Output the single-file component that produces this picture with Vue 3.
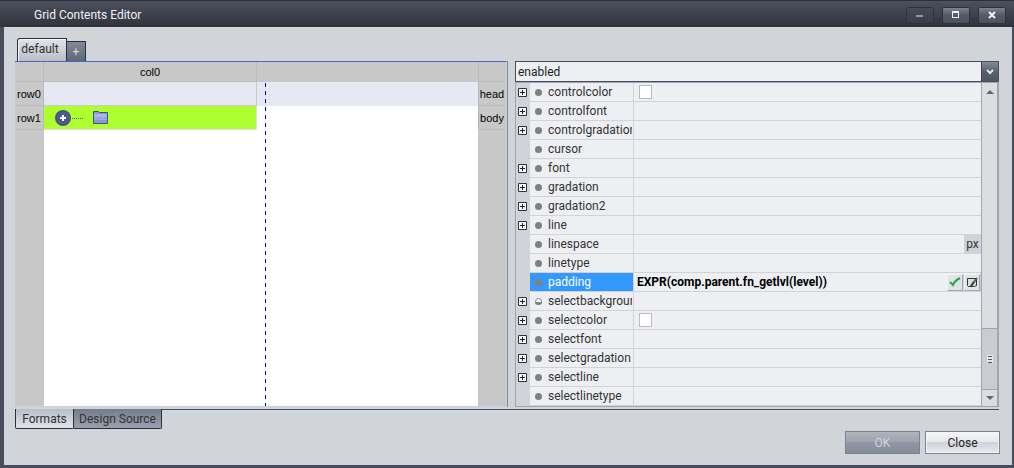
<script setup>
import { ref } from 'vue'

const current = ref('enabled')
const selected = ref('padding')
const properties = [
  { name: 'controlcolor', expand: true, swatch: true },
  { name: 'controlfont', expand: true },
  { name: 'controlgradation', expand: true },
  { name: 'cursor' },
  { name: 'font', expand: true },
  { name: 'gradation', expand: true },
  { name: 'gradation2', expand: true },
  { name: 'line', expand: true },
  { name: 'linespace', unit: 'px' },
  { name: 'linetype' },
  { name: 'padding', value: 'EXPR(comp.parent.fn_getlvl(level))' },
  { name: 'selectbackground', expand: true, half: true },
  { name: 'selectcolor', expand: true, swatch: true },
  { name: 'selectfont', expand: true },
  { name: 'selectgradation', expand: true },
  { name: 'selectline', expand: true },
  { name: 'selectlinetype' },
]
</script>

<template>
  <div class="window">
    <header class="titlebar">
      <h1>Grid Contents Editor</h1>
      <div class="controls">
        <button class="dim" aria-label="Minimize">
          <svg width="8" height="8" viewBox="0 0 8 8"><path d="M0 4h7v2H0z" fill="#9296a8" /></svg>
        </button>
        <button aria-label="Maximize">
          <svg width="8" height="8" viewBox="0 0 8 8"><path fill-rule="evenodd" d="M0 0h7v7H0zM1 2v4h5V2z" fill="#eef0f3" /></svg>
        </button>
        <button aria-label="Close window">
          <svg width="8" height="8" viewBox="0 0 8 8"><path d="M1 1l6 6M7 1L1 7" stroke="#f1f2f4" stroke-width="2" /></svg>
        </button>
      </div>
    </header>

    <main class="content">
      <nav class="tabs top">
        <button class="tab active">default</button>
        <button class="tab add" aria-label="Add format">+</button>
      </nav>

      <div class="workspace">
        <section class="designer">
          <table>
            <colgroup><col class="c-label"><col class="c-col"><col><col class="c-band"></colgroup>
            <thead>
              <tr><th></th><th>col0</th><th class="plain"></th><th class="edge"></th></tr>
            </thead>
            <tbody>
              <tr><th>row0</th><td class="head"></td><td class="head bare"></td><th class="edge">head</th></tr>
              <tr>
                <th>row1</th>
                <td class="picked">
                  <svg width="66" height="20" viewBox="0 0 66 20">
                    <circle cx="12" cy="10" r="8" fill="#4f5a8c" />
                    <circle cx="12" cy="10" r="7" fill="none" stroke="#465287" />
                    <path d="M9 10h6M12 7v6" stroke="#fff" stroke-width="2" />
                    <path d="M21 10.500h11" stroke="#4b6d2c" stroke-dasharray="1 1" />
                    <path d="M42.500 15.500v-12h5l1 1h8v11z" fill="#8797d4" stroke="#45507f" />
                    <path d="M43 6h13v3H43z" fill="#a9b7e8" />
                    <path d="M43 9h13v3H43z" fill="#98a7de" />
                  </svg>
                </td>
                <td></td>
                <th class="edge">body</th>
              </tr>
              <tr class="rest"><th></th><td></td><td></td><th></th></tr>
            </tbody>
          </table>
          <i class="guide"></i>
        </section>

        <section class="inspector">
          <div class="combo">
            <select v-model="current" aria-label="Property">
              <option>enabled</option>
            </select>
            <span class="arrow"><svg width="8" height="6" viewBox="0 0 8 6"><path d="M1 1l3 3 3-3" fill="none" stroke="#e3e6ec" stroke-width="2" /></svg></span>
          </div>
          <div class="list">
            <table>
              <colgroup><col class="c-gutter"><col class="c-name"><col></colgroup>
              <tbody>
                <tr v-for="p in properties" :key="p.name" :class="{ selected: selected === p.name }" @click="selected = p.name">
                  <td class="gutter">
                    <button v-if="p.expand" :aria-label="'Expand ' + p.name">
                      <svg width="9" height="9" viewBox="0 0 9 9"><path d="M.5 .5h8v8h-8z" fill="#f6f7f9" stroke="#333" /><path d="M2 4.500h5M4.500 2v5" stroke="#222" /></svg>
                    </button>
                  </td>
                  <th scope="row">
                    <div class="name">
                      <svg width="7" height="7" viewBox="0 0 7 7">
                        <circle v-if="!p.half" cx="3.500" cy="3.500" r="3.500" fill="#808080" />
                        <g v-else><circle cx="3.500" cy="3.500" r="3" fill="#fff" stroke="#808080" /><path d="M0 4h7a3.500 3 0 0 1-7 0z" fill="#808080" /></g>
                      </svg>
                      <span>{{ p.name }}</span>
                    </div>
                  </th>
                  <td>
                    <div class="value">
                      <button v-if="p.swatch" class="swatch" :aria-label="p.name + ' value'"></button>
                      <span v-if="p.value" class="expression">{{ p.value }}</span>
                      <span v-if="p.unit" class="unit">{{ p.unit }}</span>
                      <div v-if="p.value" class="actions">
                        <button aria-label="Apply expression">
                          <svg width="12" height="10" viewBox="0 0 12 10"><path d="M1 5l3 3c1-3 3-5 7-7" fill="none" stroke="#2fa63a" stroke-width="2" /></svg>
                        </button>
                        <button aria-label="Edit expression">
                          <svg width="12" height="11" viewBox="0 0 12 11"><path d="M1.500 1.500h9v7l-2 1h-6l-1-1z" fill="#d9dce2" stroke="#333" /><path d="M5 9l6-8" stroke="#333" stroke-width="2" /><path d="M8 5l3-4" stroke="#a9764d" /></svg>
                        </button>
                      </div>
                    </div>
                  </td>
                </tr>
              </tbody>
            </table>
            <div class="scroll">
              <button aria-label="Scroll up"><svg width="8" height="4" viewBox="0 0 8 4"><path d="M0 4l4-4 4 4z" fill="#5f687a" /></svg></button>
              <div class="track"></div>
              <div class="thumb"><svg width="6" height="8" viewBox="0 0 6 8"><path d="M0 0h6v8H0z" fill="#e6e8ec" /><path d="M1 1.500h4M1 4.500h4M1 7.500h4" stroke="#4b5568" stroke-width="1" /></svg></div>
              <button class="down" aria-label="Scroll down"><svg width="8" height="4" viewBox="0 0 8 4"><path d="M0 0l4 4 4-4z" fill="#5f687a" /></svg></button>
            </div>
          </div>
        </section>
      </div>

      <div class="bottomline"></div>
      <nav class="tabs bottom">
        <button class="tab active">Formats</button>
        <button class="tab">Design Source</button>
      </nav>
      <footer>
        <button class="action" disabled>OK</button>
        <button class="action close">Close</button>
      </footer>
    </main>
  </div>
</template>

<style>
body { margin: 0; }
</style>

<style scoped>
* { box-sizing: border-box; }
.window {
  min-height: 100vh;
  display: flex;
  flex-direction: column;
  background: #484d5b;
  padding: 0 2px 3px 4px;
  color: #333;
  font: 12px/18px Roboto, "Noto Sans", sans-serif;
}
button, select { font: inherit; color: inherit; margin: 0; padding: 0; border: 0; background: none; border-radius: 0; }
svg { display: block; flex: none; }
table { border-spacing: 0; table-layout: fixed; width: 100%; }
th, td { padding: 0; font-weight: 400; }
.titlebar {
  height: 27px;
  flex: none;
  margin: 0 -2px 0 -4px;
  padding: 2px 8px 0 34px;
  display: flex;
  align-items: center;
  justify-content: space-between;
  background: linear-gradient(#4d515e, #30333b);
  border-top: 1px solid #2d3038;
}
h1 { margin: 0; font-size: 12px; font-weight: 400; color: #eef0f4; }
.controls { display: flex; gap: 8px; }
.controls button {
  width: 28px;
  height: 17px;
  display: grid;
  place-items: center;
  border: 1px solid #30333b;
  border-radius: 2px;
  background: linear-gradient(#798191, #525968 50%, #4c5260);
}
.controls .dim { background: linear-gradient(#484c57, #3a3d46); }
.content { flex: 1; padding: 11px 13px 10px 11px; background: #d1d4d9; display: flex; flex-direction: column; }
.tabs { display: flex; }
.top { height: 23px; align-items: flex-end; padding-left: 2px; }
.top .tab { border: 1px solid #2b303b; border-bottom: 0; height: 20px; }
.top .active {
  width: 50px;
  height: 23px;
  padding: 0 4px 2px 0;
  border-radius: 3px 0 0;
  background: linear-gradient(#e2e4e8, #b9bdc7);
  box-shadow: inset 1px 1px #f5f6f8;
}
.top .add { width: 20px; margin-left: -1px; color: #d3d7df; background: linear-gradient(#828999, #5f6778); }
.workspace { flex: none; display: flex; }
.designer {
  flex: 1;
  position: relative;
  border-top: 1px solid #3e6bc9;
  border-right: 1px solid #d1d4d9;
  border-bottom: 1px solid #c9ced8;
  background: #fff;
  font: 11px/16px "Liberation Sans", sans-serif;
  color: #000;
}
.designer table { height: 100%; }
.c-label { width: 29px; }
.c-col { width: 213px; }
.c-band { width: 28px; }
.designer th { background: #c8c8c8; border-right: 1px solid #bababa; border-bottom: 1px solid #bababa; height: 24px; }
.designer thead th { height: 20px; }
.designer .plain, .designer .rest th { border-color: #c8c8c8; }
.designer .edge { border-left: 1px solid #bababa; border-right-color: #c8c8c8; }
.designer td { height: 24px; }
.designer .head { background: #e6e9f3; border-right: 1px solid #c8cbd3; border-bottom: 1px solid #c8cbd3; }
.designer .bare { border-color: #e6e9f3; }
.designer .picked { background: #adff2f; border-right: 1px solid #e0e2e6; border-bottom: 1px solid #e0e2e6; }
.picked svg { margin-left: 7px; }
.designer .rest th, .designer .rest td { height: auto; }
.guide {
  position: absolute;
  left: 250px;
  top: 21px;
  bottom: 0;
  width: 1px;
  background: repeating-linear-gradient(#0000c8 0 4px, transparent 4px 8px);
}
.inspector { width: 492px; flex: none; border-left: 1px solid #7b8492; padding-left: 7px; background: #d1d4d9; }
.combo { height: 21px; display: flex; border: 1px solid #47505f; background: #eeeff3; }
.combo select { flex: 1; appearance: none; padding-left: 2px; color: #222; outline: 0; }
.combo .arrow { width: 17px; display: grid; place-items: center; border-left: 1px solid #3d4450; background: linear-gradient(#838b9b, #565e6e 55%, #4f5665); }
.list { display: flex; border: 1px solid #9fa6b2; border-right-width: 2px; }
.list table { flex: 1; width: 0; background: #eeeff3; }
.c-gutter { width: 14px; }
.c-name { width: 104px; }
.list td, .list th { height: 19px; border-bottom: 1px solid #d1d3d9; text-align: left; vertical-align: middle; }
.list .gutter { background: #d1d3d9; }
.gutter button { display: block; margin: 0 0 0 2px; }
.list th { border-right: 1px solid #d1d3d9; overflow: hidden; }
.name { display: flex; align-items: center; gap: 6px; height: 18px; padding-left: 5px; overflow: hidden; white-space: nowrap; margin-right: 1px; }
.selected .name { background: #3399ff; color: #fff; margin-right: 0; }
.value { display: flex; align-items: center; height: 18px; padding-left: 3px; }
.swatch { width: 13px; height: 14px; margin-left: 2px; border: 1px solid #bbb; background: #fff; }
.expression { font-weight: 700; color: #000; }
.unit { margin-left: auto; width: 17px; text-align: center; background: #cfd2d7; }
.actions { display: flex; gap: 1px; margin-left: auto; padding-right: 1px; background: #c9cdd4; }
.actions button { width: 16px; height: 17px; display: grid; place-items: center; background: #e0e3e7; border: 1px solid; border-color: #f2f3f5 #a3a9b4 #a3a9b4 #f2f3f5; }
.scroll { width: 16px; display: flex; flex-direction: column; border-left: 1px solid #9fa6b2; background: #dbdde1; }
.scroll button { height: 17px; display: grid; place-items: center; }
.scroll .down { border-top: 1px solid #9fa6b2; }
.track { flex: 229; }
.thumb { flex: 60; display: grid; place-items: center; background: #c9ccd0; border-top: 1px solid #9fa6b2; }
.bottomline { height: 3px; border-bottom: 1px solid #47505f; }
.tabs.bottom { margin-top: -1px; }
.tabs.bottom .tab { height: 20px; border: 1px solid #2b303b; border-top: 0; border-radius: 0 0 2px 2px; background: linear-gradient(#747c8c, #9ba1ae); width: 89px; margin-left: -1px; }
.tabs.bottom .active { width: 59px; margin-left: 0; background: linear-gradient(#b9bdc7, #e2e4e8); }
footer { display: flex; justify-content: flex-end; gap: 5px; margin: 2px -1px 0 0; }
.action { width: 75px; height: 23px; border: 1px solid #7b8390; color: #d1d5dc; background: linear-gradient(#b0b4bd, #9ba1ae 50%, #9197a5 50%, #838b9a); }
.close { color: #222; background: linear-gradient(#f8f8f9, #e5e6e9 50%, #cfd2d8 50%, #e8e9ec); box-shadow: inset 0 0 0 1px #f4f5f7; }
</style>
